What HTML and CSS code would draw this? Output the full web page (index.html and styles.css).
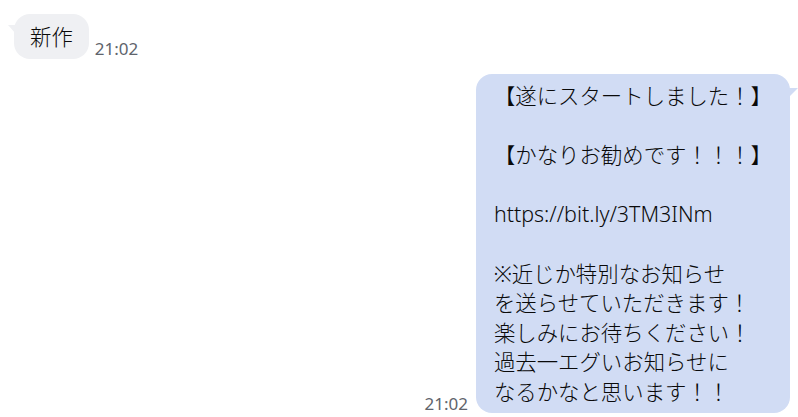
FILE: index.html
```html
<!DOCTYPE html>
<html lang="ja">
<head>
<meta charset="utf-8">
<link rel="stylesheet" href="styles.css">
</head>
<body>
<div class="chat">
  <div class="row row-in">
    <div class="bubble bubble-in">新作</div>
    <span class="time">21:02</span>
  </div>
  <div class="row row-out">
    <span class="time">21:02</span>
    <div class="bubble bubble-out">【遂にスタートしました！】

【かなりお勧めです！！！】

https://bit.ly/3TM3INm

※近じか特別なお知らせ
を送らせていただきます！
楽しみにお待ちください！
過去一エグいお知らせに
なるかなと思います！！</div>
  </div>
</div>
</body>
</html>
```
FILE: styles.css
```css
html, body {
  margin: 0;
  padding: 0;
  background: #ffffff;
}
body {
  font-family: "Noto Sans", "Noto Sans CJK JP", sans-serif;
  color: #0a0a0a;
}
.chat {
  display: flex;
  flex-direction: column;
  gap: 15px;
  padding: 14px 8px 0 14px;
}
.row {
  display: flex;
  align-items: flex-end;
}
.row-out {
  justify-content: flex-end;
}
.bubble {
  position: relative;
  font-size: 21.4px;
  font-weight: 300;
  line-height: 29.6px;
  border-radius: 16px;
}
.bubble-in {
  background: #eff0f3;
  padding: 7.7px 16px;
}
.bubble-in::before {
  content: "";
  position: absolute;
  left: -6px;
  top: 11px;
  width: 0;
  height: 0;
  border-right: 8px solid #eff0f3;
  border-bottom: 9px solid transparent;
}
.bubble-out {
  background: #d1dcf4;
  padding: 7px 18px 6px 18px;
  white-space: pre;
  flex: none;
}
.bubble-out::after {
  content: "";
  position: absolute;
  right: -8px;
  top: 14px;
  width: 0;
  height: 0;
  border-left: 10px solid #d1dcf4;
  border-bottom: 10px solid transparent;
}
.time {
  font-family: "Noto Sans", sans-serif;
  font-size: 17px;
  line-height: 19px;
  color: #60646c;
}
.row-in .time {
  margin-left: 6px;
  margin-bottom: 1px;
}
.row-out .time {
  margin-right: 8px;
}
```
